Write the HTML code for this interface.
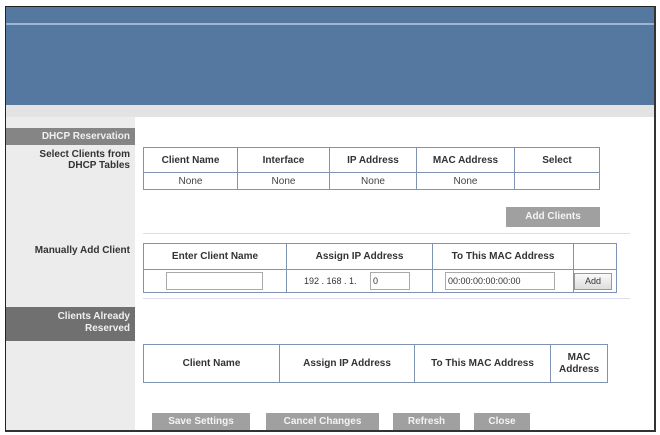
<!DOCTYPE html><html><head><style>
body{margin:0;width:660px;height:435px;background:#fff;position:relative;overflow:hidden;font-family:"Liberation Sans",sans-serif;font-weight:bold;font-size:10px;color:#333}
div{position:absolute;box-sizing:border-box}
.frame{left:5px;top:6px;width:651px;height:426px;border:1.5px solid #222;border-right:2px solid #333;border-bottom:2px solid #333}
table{position:absolute;border-collapse:collapse;font-size:10px;color:#333}
td{border:1.5px solid #7f93b5;text-align:center;padding:0}
.n{font-weight:normal;color:#444}
.btn{background:#a0a0a0;color:#f4f4f4;text-align:center;font-size:10px;line-height:18px}
.side{color:#333;text-align:right;font-size:10px;line-height:11px}
.inp{border:1px solid #aaa;background:#fff;font-weight:normal;color:#333;font-size:9px;line-height:16px;padding-left:2px}
</style></head><body>
<div style="left:6px;top:7px;width:649px;height:98px;background:#5578a0"></div>
<div style="left:6px;top:23px;width:649px;height:2px;background:#9fb5d0"></div>
<div style="left:6px;top:105px;width:649px;height:12px;background:#e3e3e3"></div>
<div style="left:6px;top:117px;width:129px;height:314px;background:#ececec"></div>
<div style="left:6px;top:128px;width:129px;height:17px;background:#858585;color:#f0f0f0;text-align:right;padding-right:5px;line-height:17px">DHCP Reservation</div>
<div class="side" style="left:6px;top:149px;width:124px">Select Clients from<br>DHCP Tables</div>
<div class="side" style="left:6px;top:245px;width:124px">Manually Add Client</div>
<div style="left:6px;top:307px;width:129px;height:34px;background:#707070;color:#f0f0f0;text-align:right;padding-right:5px;line-height:12px;padding-top:4px">Clients Already<br>Reserved</div>
<table style="left:143px;top:147px;width:457px;height:43px">
<tr style="height:25px"><td style="width:93px">Client Name</td><td style="width:91px">Interface</td><td style="width:86px">IP Address</td><td style="width:97px">MAC Address</td><td>Select</td></tr>
<tr class="n"><td class="n">None</td><td class="n">None</td><td class="n">None</td><td class="n">None</td><td></td></tr></table>
<div class="btn" style="left:506px;top:207px;width:94px;height:20px;line-height:20px">Add Clients</div>
<div style="left:143px;top:233px;width:487px;height:1px;background:#dde"></div>
<table style="left:143px;top:243px;width:474px;height:50px">
<tr style="height:26px"><td style="width:142px">Enter Client Name</td><td style="width:145px">Assign IP Address</td><td style="width:140px">To This MAC Address</td><td></td></tr>
<tr><td></td><td></td><td></td><td></td></tr></table>
<div class="inp" style="left:166px;top:272px;width:97px;height:18px"></div>
<div style="left:304px;top:272px;font-weight:normal;font-size:9px;line-height:18px">192 . 168 . 1.</div>
<div class="inp" style="left:370px;top:272px;width:40px;height:18px">0</div>
<div class="inp" style="left:445px;top:272px;width:110px;height:18px">00:00:00:00:00:00</div>
<div style="left:574px;top:273px;width:38px;height:17px;border:1px solid #999;background:linear-gradient(#fafafa,#ddd);font-weight:normal;text-align:center;line-height:15px;font-size:9px">Add</div>
<div style="left:143px;top:298px;width:487px;height:1px;background:#dde"></div>
<table style="left:143px;top:344px;width:465px;height:39px">
<tr><td style="width:135px">Client Name</td><td style="width:134px">Assign IP Address</td><td style="width:135px">To This MAC Address</td><td style="line-height:12px">MAC<br>Address</td></tr></table>
<div class="btn" style="left:152px;top:413px;width:98px;height:18px">Save Settings</div>
<div class="btn" style="left:266px;top:413px;width:113px;height:18px">Cancel Changes</div>
<div class="btn" style="left:393px;top:413px;width:67px;height:18px">Refresh</div>
<div class="btn" style="left:474px;top:413px;width:56px;height:18px">Close</div>
<div class="frame"></div>
</body></html>
